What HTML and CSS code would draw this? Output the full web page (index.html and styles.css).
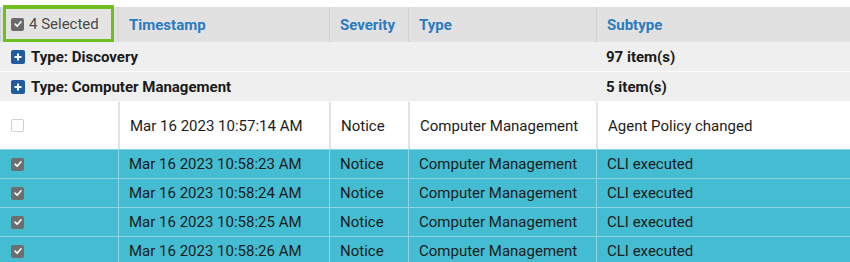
FILE: index.html
```html
<!DOCTYPE html>
<html>
<head>
<meta charset="utf-8">
<link rel="stylesheet" href="styles.css">
</head>
<body>
<div class="grid">
  <div class="row head">
    <div class="cell sel-cell">
      <div class="sel-box">
        <span class="cb cb-head"><svg viewBox="0 0 12 12" width="10" height="10"><path d="M2.5 6.2 L5 8.6 L9.6 3.4" fill="none" stroke="#fff" stroke-width="1.9" stroke-linecap="round" stroke-linejoin="round"/></svg></span>
        <span class="sel-text">4 Selected</span>
      </div>
    </div>
    <div class="cell hcell">Timestamp</div>
    <div class="cell hcell">Severity</div>
    <div class="cell hcell">Type</div>
    <div class="cell hcell">Subtype</div>
  </div>

  <div class="row group">
    <div class="gtitle"><span class="plus"><svg viewBox="0 0 14 14" width="14" height="14"><path d="M7 3.5 V10.5 M3.5 7 H10.5" stroke="#fff" stroke-width="2"/></svg></span>Type: Discovery</div>
    <div class="gcount">97 item(s)</div>
  </div>
  <div class="row group">
    <div class="gtitle"><span class="plus"><svg viewBox="0 0 14 14" width="14" height="14"><path d="M7 3.5 V10.5 M3.5 7 H10.5" stroke="#fff" stroke-width="2"/></svg></span>Type: Computer Management</div>
    <div class="gcount">5 item(s)</div>
  </div>

  <div class="row data plain">
    <div class="cell cbcell"><span class="cb cb-empty"></span></div>
    <div class="cell">Mar 16 2023 10:57:14 AM</div>
    <div class="cell">Notice</div>
    <div class="cell">Computer Management</div>
    <div class="cell">Agent Policy changed</div>
  </div>
  <div class="row data selected">
    <div class="cell cbcell"><span class="cb cb-on"><svg viewBox="0 0 12 12" width="10" height="10"><path d="M2.5 6.2 L5 8.6 L9.6 3.4" fill="none" stroke="#fff" stroke-width="1.9" stroke-linecap="round" stroke-linejoin="round"/></svg></span></div>
    <div class="cell">Mar 16 2023 10:58:23 AM</div>
    <div class="cell">Notice</div>
    <div class="cell">Computer Management</div>
    <div class="cell">CLI executed</div>
  </div>
  <div class="row data selected">
    <div class="cell cbcell"><span class="cb cb-on"><svg viewBox="0 0 12 12" width="10" height="10"><path d="M2.5 6.2 L5 8.6 L9.6 3.4" fill="none" stroke="#fff" stroke-width="1.9" stroke-linecap="round" stroke-linejoin="round"/></svg></span></div>
    <div class="cell">Mar 16 2023 10:58:24 AM</div>
    <div class="cell">Notice</div>
    <div class="cell">Computer Management</div>
    <div class="cell">CLI executed</div>
  </div>
  <div class="row data selected">
    <div class="cell cbcell"><span class="cb cb-on"><svg viewBox="0 0 12 12" width="10" height="10"><path d="M2.5 6.2 L5 8.6 L9.6 3.4" fill="none" stroke="#fff" stroke-width="1.9" stroke-linecap="round" stroke-linejoin="round"/></svg></span></div>
    <div class="cell">Mar 16 2023 10:58:25 AM</div>
    <div class="cell">Notice</div>
    <div class="cell">Computer Management</div>
    <div class="cell">CLI executed</div>
  </div>
  <div class="row data selected">
    <div class="cell cbcell"><span class="cb cb-on"><svg viewBox="0 0 12 12" width="10" height="10"><path d="M2.5 6.2 L5 8.6 L9.6 3.4" fill="none" stroke="#fff" stroke-width="1.9" stroke-linecap="round" stroke-linejoin="round"/></svg></span></div>
    <div class="cell">Mar 16 2023 10:58:26 AM</div>
    <div class="cell">Notice</div>
    <div class="cell">Computer Management</div>
    <div class="cell">CLI executed</div>
  </div>
</div>
</body>
</html>
```

FILE: styles.css
```css
html, body {
  margin: 0;
  padding: 0;
  background: #fff;
}
body {
  font-family: Roboto, "Liberation Sans", Arial, sans-serif;
  font-size: 15px;
  color: #1c1c1c;
  overflow: hidden;
}
.grid {
  padding-top: 7px;
}
.row {
  display: grid;
  grid-template-columns: 118px 211px 79px 188px 1fr;
  box-sizing: border-box;
}
.cell {
  display: flex;
  align-items: center;
  padding-left: 10px;
  border-left: 1px solid #d8d8d8;
  white-space: nowrap;
}
.cell:first-child {
  border-left: none;
  padding-left: 0;
}

/* header */
.head {
  height: 35px;
  background: #e1e1e1;
}
.head .cell {
  border-left: 1px solid #d3d3d3;
}
.hcell {
  font-weight: bold;
  color: #2a7bc0;
}
.sel-box {
  box-sizing: border-box;
  margin: -2px 0 0 2px;
  width: 111px;
  height: 37px;
  border: 3px solid #6cbf1e;
  border-top-width: 4px;
  background: #e4e4e4;
  display: flex;
  align-items: center;
  padding-left: 5px;
  gap: 5px;
}
.sel-text {
  color: #4a4a4a;
  font-size: 15px;
}
.cb {
  display: inline-flex;
  align-items: center;
  justify-content: center;
  box-sizing: border-box;
  width: 13px;
  height: 13px;
  border-radius: 2px;
}
.cb-head {
  background: #6a6a6a;
}
.cb-on {
  background: #6e6e6e;
}
.cb-empty {
  background: #fff;
  border: 1px solid #cfcfcf;
}
.cbcell {
  padding-left: 11px !important;
}

/* group rows */
.group {
  height: 30px;
  background: #efefef;
  border-bottom: 1px solid #fafafa;
  font-weight: bold;
  color: #1a1a1a;
}
.gtitle {
  grid-column: 1 / 5;
  display: flex;
  align-items: center;
  padding-left: 11px;
  gap: 6px;
}
.gcount {
  grid-column: 5;
  display: flex;
  align-items: center;
  padding-left: 10px;
}
.plus {
  display: inline-flex;
  width: 14px;
  height: 14px;
  background: #1f5b9e;
  border-radius: 2px;
}

/* data rows */
.plain {
  height: 47px;
  background: #fff;
}
.plain .cell {
  border-left: 2px solid #e4e4e4;
}
.plain .cell:first-child {
  border-left: none;
}
.selected {
  height: 29px;
  background: #44bdd2;
  border-top: 1px solid #8dd5e2;
}
.selected .cell {
  border-left: 1px solid #8ed6e3;
}
.selected .cell:first-child {
  border-left: none;
}
```
